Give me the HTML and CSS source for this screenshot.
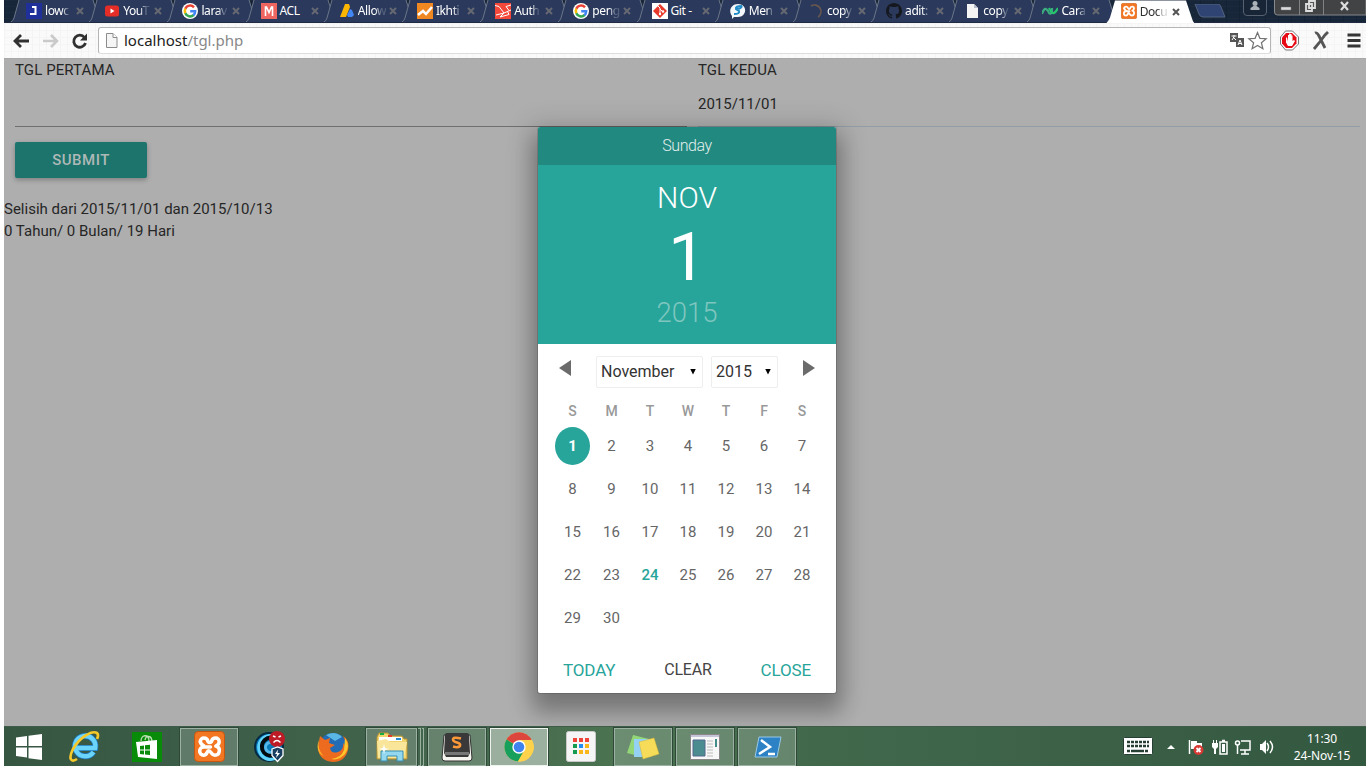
FILE: index.html
```html
<!DOCTYPE html>
<html lang="id">
<head>
<meta charset="utf-8">
<title>Document</title>
<link rel="stylesheet" href="styles.css">
</head>
<body>
<svg class="defs" width="0" height="0">
  <symbol id="google" viewBox="0 0 16 16"><circle cx="8" cy="8" r="8" fill="#fff"/><g fill="none" stroke-width="2.5"><path d="M12 4.3A5.2 5.2 0 0 0 3.3 5.8" stroke="#ea4335"/><path d="M3.4 5.6a5.3 5.3 0 0 0 0 4.8" stroke="#fbbc05"/><path d="M3.3 10.2A5.2 5.2 0 0 0 11.7 12" stroke="#34a853"/><path d="M8.2 8.2h5A5.2 5.2 0 0 1 11.4 12.2" stroke="#4285f4"/></g></symbol>
  <symbol id="xampp" viewBox="0 0 32 32"><rect x=".5" y=".5" width="31" height="31" rx="4" fill="#f37623" stroke="#c45510"/><g fill="none" stroke="#fff" stroke-width="3.600" stroke-linecap="round" stroke-linejoin="round"><path d="M6.500 11C6.500 6 13.500 6 14.500 11Q16 13 18 11C19 6 26 6 26 11Q26 14 22.500 15.500C28 17 27 25 21.500 25C17.500 25 18 20.500 15 20.500C13 20.500 14 25 10 25C4.500 25 4.500 16.500 10 16.500H17"/><path d="M6.500 11Q7 14 10 15"/></g></symbol>
  <symbol id="tab" viewBox="0 0 90 22"><path d="M0 22Q2 21 3 18L8 0H82L88 19Q89 22 90 22Z" fill="#2b3a5c"/><path d="M0 22Q2 21 3 18L8 0M82 0L88 19Q89 22 90 22" fill="none" stroke="#6c7688"/></symbol>
  <symbol id="close" viewBox="0 0 8 8"><path d="M1 1l6 6M7 1L1 7" fill="none" stroke="currentColor" stroke-width="2"/></symbol>
</svg>
<div class="screen">
  <header class="tabs">
    <div class="tab"><svg class="shape"><use href="#tab"/></svg><svg class="fav" viewBox="0 0 16 16"><path fill="#20309a" d="M0 0h16v16H0z"/><path d="M6 4h3.500v7H4" fill="none" stroke="#fff" stroke-width="2"/></svg><span>lowc</span><svg class="x"><use href="#close"/></svg></div>
    <div class="tab"><svg class="shape"><use href="#tab"/></svg><svg class="fav" viewBox="0 0 16 16"><rect x="1" y="2.500" width="14" height="11" rx="2.500" fill="#e52d27"/><path d="M6.500 5.500v5l4-2.500z" fill="#fff"/></svg><span>YouT</span><svg class="x"><use href="#close"/></svg></div>
    <div class="tab"><svg class="shape"><use href="#tab"/></svg><svg class="fav"><use href="#google"/></svg><span>larav</span><svg class="x"><use href="#close"/></svg></div>
    <div class="tab"><svg class="shape"><use href="#tab"/></svg><svg class="fav" viewBox="0 0 16 16"><path fill="#ef6560" d="M0 0h16v16H0z"/><path d="M4.500 13V4h1L8 9.500 10.500 4h1v9" fill="none" stroke="#fff" stroke-width="1.600"/></svg><span class="full">ACL</span><svg class="x"><use href="#close"/></svg></div>
    <div class="tab"><svg class="shape"><use href="#tab"/></svg><svg class="fav" viewBox="0 0 16 16"><path d="M6 1h4l1 3-4 10H1z" fill="#fbb604"/><path d="M11 6l2 1 2 5-2 2H9L8 12z" fill="#4285f4"/></svg><span>Allow</span><svg class="x"><use href="#close"/></svg></div>
    <div class="tab"><svg class="shape"><use href="#tab"/></svg><svg class="fav" viewBox="0 0 16 16"><path fill="#f08822" d="M0 0h16v16H0z"/><path d="M1 12l5-4 3 3 6-7" fill="none" stroke="#fff" stroke-width="2.500"/></svg><span>Ikhti</span><svg class="x"><use href="#close"/></svg></div>
    <div class="tab"><svg class="shape"><use href="#tab"/></svg><svg class="fav" viewBox="0 0 16 16"><path fill="#f4483a" d="M0 0h16v16H0z"/><path d="M0 2.500l4 1 5 6.500-8 2M5 14l4-4 7-3M16 2l-5 1.500 3 4M5 14l9-2.500-1.500-3" fill="none" stroke="#fff"/></svg><span>Auth</span><svg class="x"><use href="#close"/></svg></div>
    <div class="tab"><svg class="shape"><use href="#tab"/></svg><svg class="fav"><use href="#google"/></svg><span>peng</span><svg class="x"><use href="#close"/></svg></div>
    <div class="tab"><svg class="shape"><use href="#tab"/></svg><svg class="fav" viewBox="0 0 16 16"><path fill="#fff" d="M0 0h16v16H0z"/><path d="M8 1l7 7-7 7-7-7z" fill="#e8392a"/><path d="M6 3l2 2v6M8 6l3 3" stroke="#fff" fill="none"/><circle cx="8" cy="11" r="1.200" fill="#fff"/><circle cx="11" cy="8.500" r="1.200" fill="#fff"/></svg><span class="full">Git -</span><svg class="x"><use href="#close"/></svg></div>
    <div class="tab"><svg class="shape"><use href="#tab"/></svg><svg class="fav" viewBox="0 0 16 16"><path d="M8 1c10 0 9 13 0 13H4l-2 2v-3C-2 8 1 1 8 1z" fill="#f4f8fb"/><path d="M12 3Q5 3 6 6L9 8Q10 11 4 11M12 3Q11 6 7 6" fill="none" stroke="#218bc7" stroke-width="2"/></svg><span>Men</span><svg class="x"><use href="#close"/></svg></div>
    <div class="tab"><svg class="shape"><use href="#tab"/></svg><svg class="fav" viewBox="0 0 16 16"><path d="M3 3a6.500 6.500 0 1 1 7 11" fill="none" stroke="#69574e" stroke-width="1.600"/></svg><span>copy</span><svg class="x"><use href="#close"/></svg></div>
    <div class="tab"><svg class="shape"><use href="#tab"/></svg><svg class="fav" viewBox="0 0 16 16"><path fill="#15181e" d="M8 0C3.600 0 0 3.600 0 8c0 3.500 2.300 6.500 5.500 7.600.4.100.5-.2.500-.4v-1.500c-2.200.5-2.700-1-2.700-1-.4-.9-.9-1.100-.9-1.100-.7-.5.100-.5.100-.5.800.1 1.200.8 1.200.8.700 1.200 1.900.9 2.300.7.100-.5.300-.9.500-1.100-1.800-.2-3.600-.9-3.600-4 0-.9.300-1.600.8-2.100-.1-.2-.4-1 .1-2.100 0 0 .7-.2 2.200.8 1.300-.3 2.700-.3 4 0 1.500-1 2.200-.8 2.200-.8.400 1.100.2 1.900.1 2.100.5.600.8 1.300.8 2.100 0 3.100-1.900 3.700-3.700 3.900.3.300.6.800.6 1.500v2.300c0 .2.100.5.500.4C13.700 14.500 16 11.500 16 8c0-4.400-3.600-8-8-8z"/></svg><span>adit:</span><svg class="x"><use href="#close"/></svg></div>
    <div class="tab"><svg class="shape"><use href="#tab"/></svg><svg class="fav" viewBox="0 0 16 16"><path d="M3 1h7l4 4v10H3z" fill="#f4f4f4"/><path d="M10 1v4h4" fill="#b6bdca"/></svg><span>copy</span><svg class="x"><use href="#close"/></svg></div>
    <div class="tab"><svg class="shape"><use href="#tab"/></svg><svg class="fav" viewBox="0 0 16 16"><path d="M0 11q2-6 4-5t3 4q2 2 3-2V5" fill="none" stroke="#3dab7f" stroke-width="2.200"/><path d="M7 5q3 6 5 5t4-5" fill="none" stroke="#26c46f" stroke-width="2.200"/></svg><span>Cara</span><svg class="x"><use href="#close"/></svg></div>
    <div class="tab active"><svg class="shape" viewBox="0 0 90 22"><path d="M0 23Q3 20 4 17L9 0H80L86 18Q87 22 89 23Z" fill="#fff"/></svg><svg class="fav"><use href="#xampp"/></svg><span>Docu</span><svg class="x"><use href="#close"/></svg></div>
    <svg class="newtab" width="32" height="14" viewBox="0 0 32 14"><path d="M1 0h23q2 0 3 3l4 10H9q-3 0-4-3z" fill="#2f4472" stroke="#53637f"/></svg>
    <svg class="user" width="24" height="16" viewBox="0 0 24 16"><path d="M.5 0v12q0 3.500 3.500 3.500h16q3.500 0 3.500-3.500V0" fill="#182536" stroke="#556170"/><circle cx="12" cy="3.500" r="2.500" fill="#aab1b8"/><path d="M7.500 10V8l3-2h3l3 2v2z" fill="#aab1b8"/></svg>
    <svg class="window" width="92" height="16" viewBox="0 0 92 16"><path d="M.5-1v13q0 3 3 3H92V-1z" fill="#424345" stroke="#87898c"/><path d="M25.500 0v15M49.500 0v15" stroke="#808285"/><path d="M7 7h10v3H7z" fill="#ddd" stroke="#777" stroke-width=".5"/><path d="M35 1h6v7h-6z M32 4h6v7h-6z" fill="#555" stroke="#ddd" stroke-width="1.800"/><path d="M67 2l7 8M74 2l-7 8" stroke="#ddd" stroke-width="2.200"/></svg>
  </header>
  <nav class="toolbar">
    <svg width="92" height="32" viewBox="0 0 92 32"><g fill="none"><path d="M25 16H12M17 10l-6 6 6 6" stroke="#303030" stroke-width="2.800"/><path d="M39 16h13M47 10l6 6-6 6" stroke="#cacaca" stroke-width="2.600"/><path d="M80.500 12.500A6 6 0 1 0 81.500 18" stroke="#303030" stroke-width="2.800"/></g><path d="M83 8.500v7h-7z" fill="#303030"/></svg>
    <div class="address">
      <svg width="14" height="16" viewBox="0 0 14 16"><path d="M1.500.5H8l4 4v10H1.500z" fill="#f5f5f5" stroke="#8c8c8c"/><path d="M8 .5v4h4" fill="#fff" stroke="#8c8c8c"/></svg>
      <p>localhost<i>/tgl.php</i></p>
      <svg width="40" height="20" viewBox="0 0 40 20"><path d="M2 2h8v9H2zM8 7h8v9H8z" fill="#555"/><path d="M3.500 5h5M6 4v2L4 9M5 6l3 3" stroke="#fff" fill="none"/><path d="M10 14l2-5 2 5M11 12.500h2" stroke="#fff" fill="none"/><path d="M29.500 1.500l2.400 5.800 6.300.4-4.800 4 1.500 6.100-5.400-3.300-5.400 3.300 1.500-6.100-4.800-4 6.300-.4z" fill="#fff" stroke="#737373" stroke-width="1.200"/></svg>
    </div>
    <svg class="extensions" width="85" height="30" viewBox="0 0 85 30"><g transform="translate(1 -.5)"><path d="M5.500 5.500h7l6 6v7l-6 6h-7l-5-6v-7z" fill="#fff" stroke="#777"/><path d="M6 7.500h6L16.500 12v6L12 22.500H6L2 18v-6z" fill="#e70b16"/><path d="M6 12v5l2 3.500h4l3-5-1-1-1.500 1V10h-1v5-6.500h-1.200V15 8h-1.200v7V9.500H8V16l-1-4z" fill="#fff"/></g><path d="M36 7q2-1 4 3l6 12M49 6l-3 3-6 8-5 6" fill="none" stroke="#555" stroke-width="2.800"/><path d="M68.500 9h13M68.500 14.500h13M68.500 20h13" stroke="#353535" stroke-width="3.200"/></svg>
  </nav>
  <main>
    <form>
      <section class="field"><label>TGL PERTAMA</label><div class="value"></div></section>
      <section class="field selected"><label>TGL KEDUA</label><div class="value">2015/11/01</div></section>
    </form>
    <button class="submit">SUBMIT</button>
    <p class="result">Selisih dari 2015/11/01 dan 2015/10/13<br>0 Tahun/ 0 Bulan/ 19 Hari</p>
    <div class="picker">
      <div class="weekday">Sunday</div>
      <div class="date"><div class="month">NOV</div><div class="day">1</div><div class="year">2015</div></div>
      <div class="nav"><i class="arrow prev"></i><div class="select month-select">November<b></b></div><div class="select">2015<b></b></div><i class="arrow next"></i></div>
      <div class="calendar">
        <b>S</b><b>M</b><b>T</b><b>W</b><b>T</b><b>F</b><b>S</b>
        <span class="chosen"><em>1</em></span><span>2</span><span>3</span><span>4</span><span>5</span><span>6</span><span>7</span>
        <span>8</span><span>9</span><span>10</span><span>11</span><span>12</span><span>13</span><span>14</span>
        <span>15</span><span>16</span><span>17</span><span>18</span><span>19</span><span>20</span><span>21</span>
        <span>22</span><span>23</span><span class="today">24</span><span>25</span><span>26</span><span>27</span><span>28</span>
        <span>29</span><span>30</span>
      </div>
      <div class="actions"><span>TODAY</span><span class="clear">CLEAR</span><span>CLOSE</span></div>
    </div>
  </main>
  <footer class="taskbar">
    <div class="task start"><svg width="28" height="28" viewBox="0 0 28 28"><path d="M1 4.500l11-1.500v10H1zM13.500 2.700L27 1v12H13.500zM1 14.500h11v10L1 23zM13.500 14.500H27V27l-13.500-1.800z" fill="#fff"/></svg></div>
    <div class="task"><svg width="34" height="34" viewBox="0 0 34 34"><path d="M25.500 22a10.200 10.200 0 1 1 1.700-4H9" fill="none" stroke="#1e78bd" stroke-width="6"/><path d="M25.500 22a10.200 10.200 0 1 1 1.700-4H9" fill="none" stroke="#6bd4fa" stroke-width="4.500"/><path d="M9 29C3 33 0 29 5 19 12 7 24 0 29 3q2 2 0 6" fill="none" stroke="#f6c92a" stroke-width="2.700"/></svg></div>
    <div class="task"><svg width="30" height="30" viewBox="0 0 30 30"><path fill="#078b08" d="M0 0h30v30H0z"/><path d="M9 9c0-7 8-7 8 0M13 8c1-5 7-5 7 2" fill="none" stroke="#bde0b5" stroke-width="1.300"/><path d="M4 10l21-2v19L6 25z" fill="#fff"/><path d="M8 14l4-.5v4H8zM13 13.300l5-.5v4.700h-5zM8 18.500h4v4L8 22zM13 18.500h5V23l-5-.5z" fill="#078b08"/></svg></div>
    <div class="task open"><svg width="31" height="31"><use href="#xampp"/></svg></div>
    <div class="task"><svg width="34" height="34" viewBox="0 0 34 34"><circle cx="15" cy="17" r="14" fill="#0878b8" stroke="#052a43" stroke-width="2"/><path d="M24 8A12 12 0 1 0 24 27" stroke="#61d4fb" stroke-width="3" fill="none"/><path d="M23 10A9 9 0 1 0 22 24" stroke="#030a10" stroke-width="4" fill="none"/><path d="M19 13a5 5 0 1 0 1 8" stroke="#52b6e8" stroke-width="3" fill="none"/><circle cx="23" cy="9" r="8" fill="#bd1c26"/><path d="M19.500 12.500q3.500-4 7 0" stroke="#fff" stroke-width="1.300" fill="none"/><path d="M19 6l2.500 1M27 6l-2.500 1" stroke="#fff" stroke-width="1.500"/><path d="M18 19l5.500-2 5.500 2v6.500l-5.500 6-5.500-6z" fill="#183e61" stroke="#fff" stroke-width="1.300"/><path d="M24 19.500l-3 4.500h2l-1 4 4-5h-2.500z" fill="#fff"/></svg></div>
    <div class="task"><svg width="32" height="32" viewBox="0 0 32 32"><circle cx="16" cy="16" r="14" fill="#236bb4"/><path d="M9 4Q18-1 25 6l-7 4z" fill="#59b6e5"/><path d="M3 5l5 4 5-2-1 5 6 2-5 3q1 6 8 4 6-2 5-9 3 2 2 7 3-6-2-14 7 4 5 14-3 12-15 12Q2 30 1 17z" fill="#ec6b1f"/><path d="M28 7q6 8 0 16-6 7-14 5 10-1 13-9z" fill="#ffc62c"/><path d="M3 6q-4 12 4 19-8-3-6-13z" fill="#ffaf25"/></svg></div>
    <div class="explorer"><div class="task open"><svg width="34" height="32" viewBox="0 0 34 32"><path d="M2 6l2-4h9l2 3h12l2 3h3v20H2z" fill="#f2d46c" stroke="#b49135"/><path d="M4 6h23v4H4z" fill="#fff"/><path d="M5 3h4" stroke="#16ab42" stroke-width="2"/><path d="M13 5h4" stroke="#e33b25" stroke-width="2"/><path d="M21 8h5" stroke="#218bce" stroke-width="2"/><path d="M2 10l9-2 4 3h17l-3 16H3z" fill="#fae69b"/><path d="M6 30V20h22v10h-6v-5H12v5z" fill="#94d8ef" stroke="#358fb4"/><path d="M9 13l1 4 4 1-4 1-1 4-1-4-4-1 4-1z" fill="#fff"/></svg></div><i></i><i></i></div>
    <div class="task open"><svg width="32" height="30" viewBox="0 0 32 30"><path d="M3 3h26l2 23q0 3-3 3H4q-3 0-3-3z" fill="#f5f4ee" stroke="#333"/><path d="M6 1h20q2 0 2 2l1 18-2 4H5l-2-4L4 3q0-2 2-2z" fill="#393939"/><path d="M4 20h24v3H4z" fill="#777"/><path d="M20 6.500q-8-2-8 1 0 2 4 3t3 3.500q-2 2-7 .5" fill="none" stroke="#fb9939" stroke-width="2.500"/></svg></div>
    <div class="task open current"><svg width="30" height="30" viewBox="0 0 30 30"><circle cx="15" cy="15" r="14.500" fill="#ffd24c"/><path d="M15 15L2.500 7.500a14.500 14.500 0 0 1 25 0z" fill="#dc463c"/><path d="M15 15L2.500 7.500A14.500 14.500 0 0 0 14 29.500l7-12z" fill="#17a05b"/><path d="M15 8h13a14.500 14.500 0 0 1-14 21.500L21 17z" fill="#ffd24c"/><circle cx="15" cy="15" r="6.700" fill="#fff"/><circle cx="15" cy="15" r="5.300" fill="#3f84ee"/></svg></div>
    <div class="task"><svg width="30" height="31" viewBox="0 0 30 31"><rect x=".5" y=".5" width="29" height="30" rx="2" fill="#f5f5f5" stroke="#c9c9c9"/><path d="M7 7h4v4H7zM13 7h4v4h-4zM19 7h4v4h-4z" fill="#f04438"/><path d="M7 13h4v4H7zM7 19h4v4H7z" fill="#159b50"/><path d="M13 13h4v4h-4z" fill="#238ff0"/><path d="M19 13h4v4h-4zM13 19h4v4h-4zM19 19h4v4h-4z" fill="#fab719"/></svg></div>
    <div class="task open"><svg width="34" height="28" viewBox="0 0 34 28"><path d="M7 2l16 4-6 18-16-4z" fill="#92d677"/><path d="M8 6h17v18H8z" fill="#95d1f2"/><path d="M13 9l15-4 5 16-16 5z" fill="#f6dc58" stroke="#d7b839" stroke-width=".5"/></svg></div>
    <div class="task open"><svg width="30" height="26" viewBox="0 0 30 26"><path d="M.5.5h29v25H.5z" fill="#f7f7f7" stroke="#888"/><path d="M1 2h28" stroke="#c6c3d6" stroke-width="2"/><path d="M3 6h12v16H3z" fill="#4b8c91" stroke="#52678b"/><path d="M17 7h6M17 10h6M17 13h6M17 16h6M17 19h6M17 22h6" stroke="#bbb"/><path d="M26 5v8" stroke="#438d88" stroke-width="2"/></svg></div>
    <div class="task open"><svg width="32" height="28" viewBox="0 0 32 28"><path d="M8 4h22l-4 20H4z" fill="#2c82c4" stroke="#99c8e5"/><path d="M10 7l9 7-11 7M17 21h7" fill="none" stroke="#fff" stroke-width="2.500"/></svg></div>
    <div class="tray"><svg width="160" height="38" viewBox="0 0 160 38"><rect x=".5" y="9.500" width="29" height="17" rx="1" fill="#fff" stroke="#253f32"/><path d="M4 14h22M4 18h22" stroke="#253f32" stroke-width="2.500" stroke-dasharray="3 1"/><path d="M4 23h22" stroke="#253f32" stroke-width="2.500" stroke-dasharray="3 1 13 1"/><path d="M44 21l4-4 4 4z" fill="#fff"/><path d="M66.500 12v14" stroke="#fff" stroke-width="1.500"/><path d="M68 13h6v2h5v6H68z" fill="#fff"/><circle cx="75.500" cy="22" r="5" fill="#d73933"/><path d="M73.500 20l4 4M77.500 20l-4 4" stroke="#fff" stroke-width="1.800"/><path d="M90 12h1v3h2v-3h1v3h1v4l-2 2v5h-2v-5l-2-2v-4h1z" fill="#fff"/><path d="M97 14h7v12h-7zM99 12.500h3" fill="none" stroke="#fff" stroke-width="1.500"/><path d="M99 16h3v8h-3z" fill="#fff"/><g fill="none" stroke="#fff" stroke-width="1.500"><path d="M118 13h9v9h-10M122 22v4M118 26h8M114.500 17v9"/><circle cx="114.500" cy="15" r="2"/><path d="M144 15q3 4 0 8M147 13q5 6 0 12"/></g><path d="M137 16h2l4-4v14l-4-4h-2z" fill="#fff"/></svg></div>
    <div class="clock"><span>11:30</span><span>24-Nov-15</span></div>
  </footer>
</div>
</body>
</html>
```
FILE: styles.css
```css
* { box-sizing: border-box; }
body { margin: 0; background: #fff; font-family: Roboto, sans-serif; overflow: hidden; }
p { margin: 0; }
svg { display: block; flex: none; }
.defs { position: absolute; }
.screen { width: 1362px; height: 766px; margin-left: 4px; display: flex; flex-direction: column; overflow: hidden; }
.tabs { height: 23px; flex: none; display: flex; align-items: flex-start; padding-left: 10px; background-color: #172639; background-image: linear-gradient(#22324455 1px, transparent 1px), linear-gradient(90deg, #0d1a2b66 1px, transparent 1px); background-size: 9px 6px, 13px 12px; border-bottom: 1px solid #202c43; }
.tab { width: 78.200px; height: 22px; flex: none; position: relative; display: flex; align-items: center; padding-left: 12px; color: #fff; font: 12px "Noto Sans", sans-serif; }
.shape { position: absolute; left: -3px; top: 0; width: 90px; height: 22px; }
.fav { position: relative; width: 16px; height: 16px; }
.tab span { position: relative; width: 28px; height: 18px; line-height: 18px; margin-left: 3px; white-space: nowrap; letter-spacing: -.4px; -webkit-mask-image: linear-gradient(90deg, #000 60%, #0003 85%); }
.tab .full { -webkit-mask-image: none; }
.x { position: relative; width: 8px; height: 8px; margin-left: 3px; color: #666872; }
.active { color: #303030; z-index: 1; height: 23px; }
.active .shape { height: 23px; }
.active .fav { top: -1px; }
.active .x { color: #555; margin-left: 4px; }
.newtab { margin: 4px 0 0 7px; }
.user { margin-left: 17px; }
.window { margin-left: 7px; }
.toolbar { height: 35px; flex: none; display: flex; align-items: center; background-color: #fafafa; background-image: linear-gradient(90deg, #f4f4f4 1px, transparent 1px), linear-gradient(#f5f5f5 1px, transparent 1px); background-size: 7px 9px, 11px 7px; }
.address { width: 1173px; height: 27px; margin-left: 2px; border: 1px solid #b5b5b5; border-bottom-color: #ddd; border-radius: 3px; background: #fff; display: flex; align-items: center; padding: 0 2px 0 6px; }
.address p { flex: 1; margin: -2px 0 0 5px; font: 15px "Noto Sans", sans-serif; color: #222; letter-spacing: 0; }
.address i { font-style: normal; color: #888; }
.extensions { margin-left: 8px; }
main { position: relative; flex: none; height: 668px; background: #aeaeae; overflow: hidden; color: #262626; font-size: 15px; border-top: 1px solid #a8a8a8; }
form { display: grid; grid-template-columns: 683px 679px; height: 68px; }
.field { margin-left: 11px; border-bottom: 1px solid #6f6f6f; }
.field:last-child { border-color: #929da8; margin-right: 6px; }
.field label, .value { display: block; line-height: 22px; height: 22px; }
.field label { letter-spacing: .1px; }
.value { margin-top: 12px; }
.submit { display: block; margin: 15px 0 0 11px; width: 132px; height: 36px; border: 0; border-radius: 2px; background: #1c746c; color: #aeb8b7; font: 500 15px Roboto, sans-serif; letter-spacing: .5px; box-shadow: 0 2px 5px #0004; }
.result { margin-top: 20px; line-height: 22px; }
.picker { position: absolute; left: 534px; top: 68px; width: 298px; height: 566px; border-radius: 2px; background: #fff; box-shadow: 0 0 0 1px #0002, 0 16px 20px 5px #0003, 0 6px 26px 8px #0000002b; }
.weekday { height: 38px; line-height: 38px; text-align: center; color: #e2eeec; font-weight: 300; background: #21897f; border-radius: 2px 2px 0 0; font-size: 16px; letter-spacing: -.4px; }
.date { height: 179px; background: #27a59a; color: #fff; text-align: center; }
.month { height: 65px; line-height: 65px; font-size: 30px; font-weight: 300; }
.day { height: 55px; line-height: 55px; font-size: 67px; font-weight: 400; }
.year { height: 55px; line-height: 55px; font-size: 27.500px; font-weight: 300; color: #7fc6bf; }
.nav { height: 51px; padding: 12px 21px 0; display: flex; align-items: flex-start; }
.arrow { width: 12px; height: 16px; margin-top: 4px; background: #6b6b6b; clip-path: polygon(100% 0, 0 50%, 100% 100%); }
.next { margin-left: 25px; clip-path: polygon(0 0, 100% 50%, 0 100%); }
.select { width: 67px; height: 32px; border: 1px solid #eee; border-radius: 2px; display: flex; align-items: center; justify-content: space-between; padding: 0 6px 1px 4px; color: #333; font-size: 16px; }
.month-select { width: 107px; margin: 0 8px 0 25px; }
.select b { width: 6px; height: 6px; background: #000; clip-path: polygon(0 0, 100% 0, 50% 100%); }
.calendar { margin-left: 15px; display: grid; grid-template-columns: 39px 39px repeat(5, 38px); grid-template-rows: 30px repeat(5, 43px); color: #666; text-align: center; }
.calendar b { line-height: 32px; font-size: 14px; font-weight: 500; color: #999; }
.calendar span { line-height: 42px; font-size: 15px; }
.chosen em { display: block; width: 35px; height: 38px; line-height: 38px; margin: 2px auto 0; border-radius: 50%; color: #fff; background: #27a59a; font-style: normal; font-weight: 700; }
.calendar .today { color: #27a59a; font-weight: 500; }
.actions { height: 52px; margin-top: 4px; padding: 0 25px; display: flex; align-items: center; justify-content: space-between; color: #27a59a; font-size: 17px; letter-spacing: -.15px; }
.clear { color: #444; font-size: 16px; padding-bottom: 2px; }
.taskbar { height: 40px; flex: none; display: flex; align-items: center; background: linear-gradient(90deg, #365642, #42644c 30%, #4b7350 45%, #42684c 60%, #335840); border-top: 1px solid #3e5c47; }
.task { width: 58px; height: 38px; margin-right: 4px; display: flex; align-items: center; justify-content: center; border: 1px solid transparent; flex: none; }
.start { width: 49px; margin-right: 3px; }
.open { border-color: #9bb1a1; background: #ffffff30; box-shadow: 0 0 0 1px #2e4938; }
.explorer { width: 58px; margin-right: 4px; display: flex; flex: none; }
.explorer .task { width: 51px; margin: 0; }
.explorer i { width: 3px; height: 38px; margin-left: 1px; border: 1px solid #9bb1a1; border-left: 0; }
.current { border-color: #edf3ed; background: #ffffff75; }
.tray { margin-left: 323px; }
.clock { width: 78px; color: #fff; display: flex; flex-direction: column; align-items: center; font: 12px/17px "Noto Sans", sans-serif; letter-spacing: -.1px; }
```
